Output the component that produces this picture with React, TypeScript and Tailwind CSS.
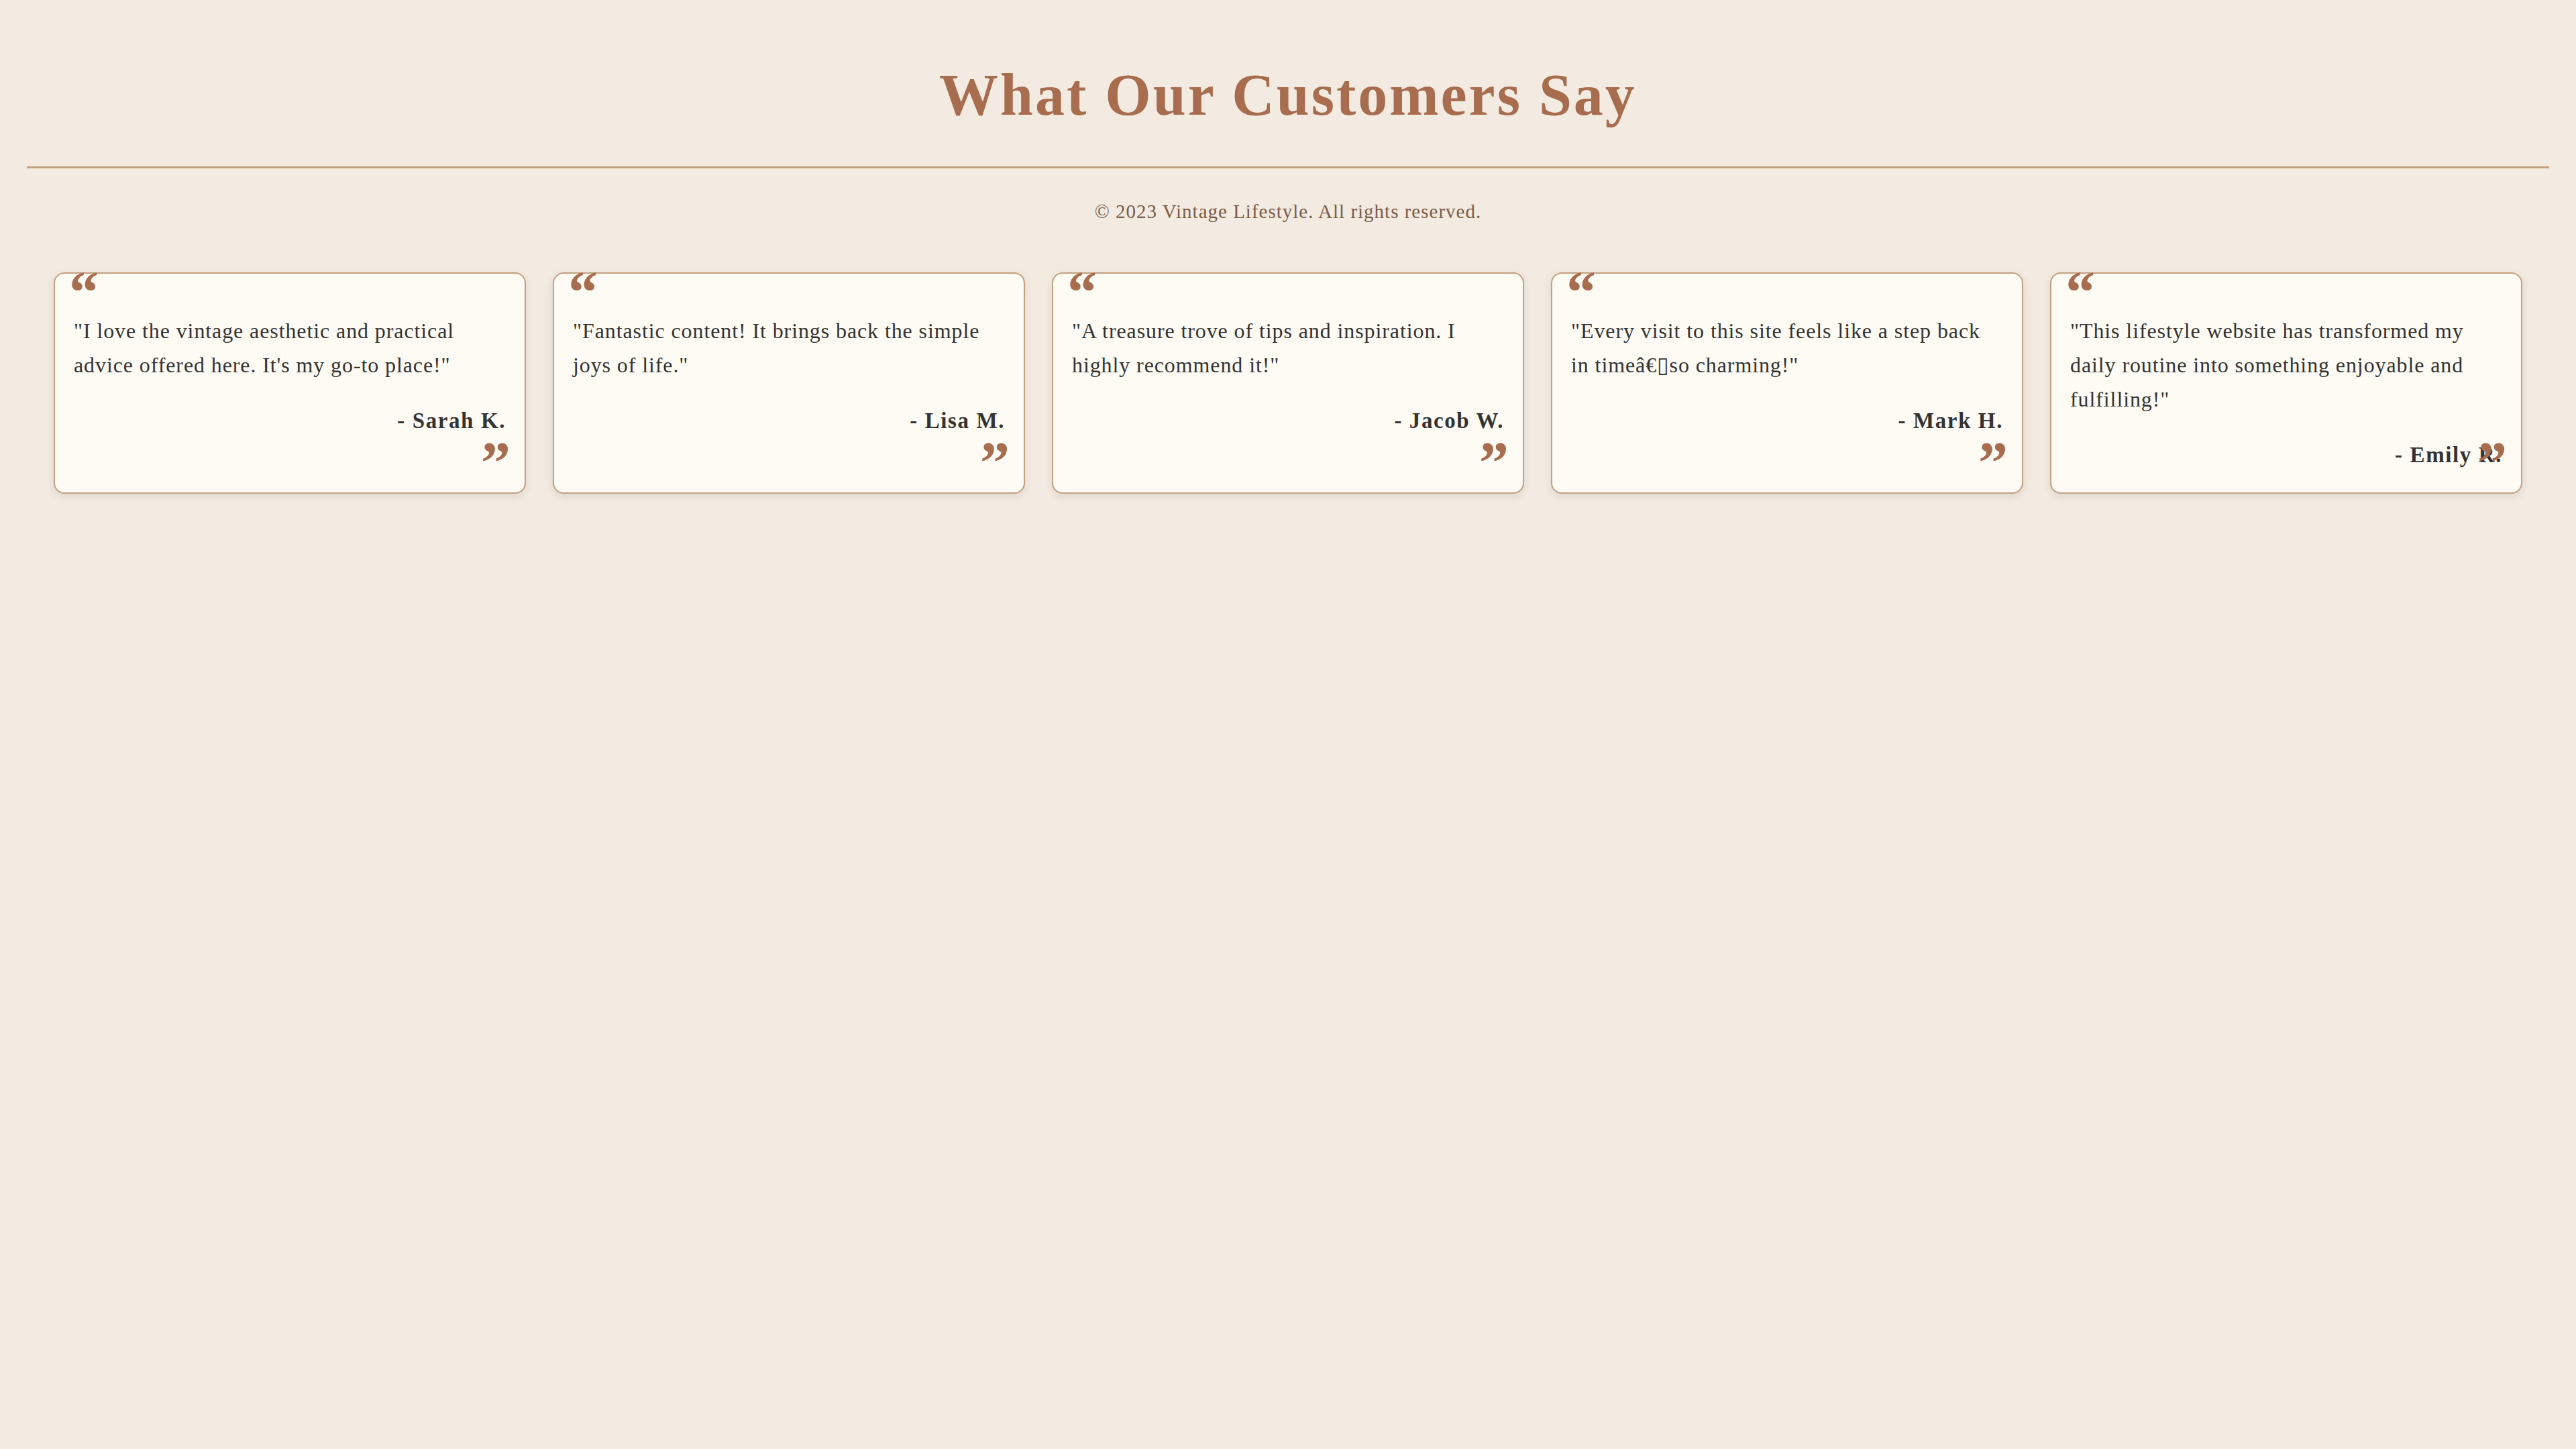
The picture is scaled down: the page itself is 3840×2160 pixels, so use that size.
const testimonials = [
  { text: '"I love the vintage aesthetic and practical advice offered here. It\'s my go-to place!"', author: '- Sarah K.' },
  { text: '"Fantastic content! It brings back the simple joys of life."', author: '- Lisa M.' },
  { text: '"A treasure trove of tips and inspiration. I highly recommend it!"', author: '- Jacob W.' },
  { text: '"Every visit to this site feels like a step back in time\u00e2\u20ac\u25afso charming!"', author: '- Mark H.' },
  { text: '"This lifestyle website has transformed my daily routine into something enjoyable and fulfilling!"', author: '- Emily R.' },
]

const serif = "font-['Liberation_Serif','DejaVu_Serif',serif]"

export default function App() {
  return (
    <div className={`min-h-screen bg-[#f3ebe2] text-[#333333] ${serif}`}>
      {/* Header */}
      <header className="mx-[40px] pt-[101px] pb-[65px] border-b-[3px] border-[#c4a07f] text-center">
        <h1 className="text-[88px] leading-[82px] font-bold text-[#a86c4e] tracking-[3px]">What Our Customers Say</h1>
      </header>

      <p className="mt-[50px] text-center text-[29px] leading-[28px] text-[#7a5c48] tracking-[1px]">
        © 2023 Vintage Lifestyle. All rights reserved.
      </p>

      {/* Testimonials */}
      <section className="flex gap-[40px] px-[80px] mt-[77px]">
        {testimonials.map((t, i) => (
          <div
            key={t.author ?? i}
            className="relative flex-1 min-w-0 rounded-[16px] border-2 border-[#c4a07f] bg-[#fefbf4] px-[28px] pt-[28px] pb-[30px] shadow-[0_4px_14px_rgba(0,0,0,0.09)]"
          >
            <span className="absolute left-[21px] top-[-16px] text-[88px] leading-[88px] font-bold text-[#a86c4e] select-none">
              “
            </span>
            <p className="my-[32px] text-[32px] leading-[51px] tracking-[0.9px]">{t.text}</p>
            <p className="text-right text-[33px] leading-[51px] font-bold tracking-[1.6px]">{t.author}</p>
            <span className="absolute right-[21px] bottom-[0px] text-[88px] leading-[88px] font-bold text-[#a86c4e] select-none">
              ”
            </span>
          </div>
        ))}
      </section>
    </div>
  )
}
